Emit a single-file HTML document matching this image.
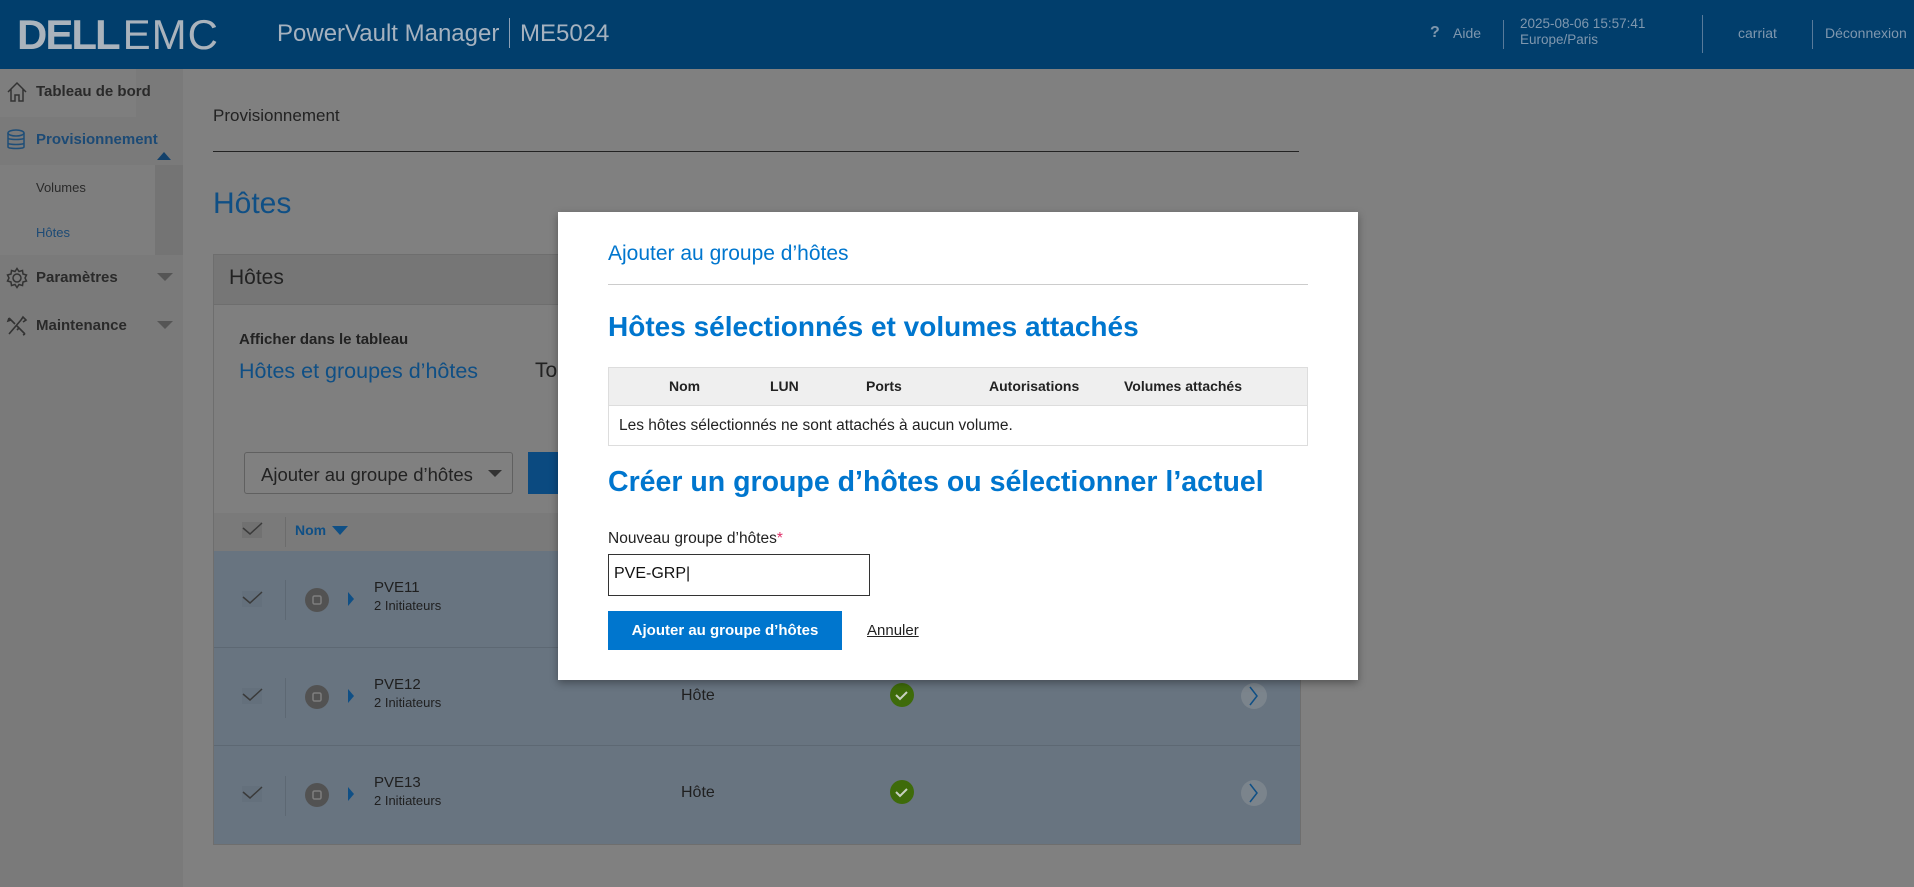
<!DOCTYPE html>
<html><head><meta charset="utf-8"><style>
*{margin:0;padding:0;box-sizing:border-box}
body{width:1914px;height:887px;overflow:hidden;background:#808080;font-family:"Liberation Sans",sans-serif;position:relative}
.a{position:absolute;white-space:nowrap}
</style></head><body>
<div class="a" style="left:0;top:0;width:1914px;height:69px;background:#013e6c"></div>
<div class="a" style="left:17px;top:11px;font-size:42px;font-weight:bold;color:#aab3bc;letter-spacing:-2px">DELL<span style="font-weight:normal;letter-spacing:1px;margin-left:4px">EMC</span></div>
<div class="a" style="left:277px;top:20px;font-size:24px;color:#a6b2bf">PowerVault Manager</div>
<div class="a" style="left:509px;top:18px;width:1px;height:30px;background:#8da0b5"></div>
<div class="a" style="left:520px;top:20px;font-size:24px;color:#a6b2bf">ME5024</div>
<div class="a" style="left:1430px;top:24px;font-size:16px;font-weight:bold;color:#7f97ae">?</div>
<div class="a" style="left:1453px;top:25px;font-size:14px;color:#7f97ae">Aide</div>
<div class="a" style="left:1503px;top:20px;width:1px;height:29px;background:#587a9a"></div>
<div class="a" style="left:1520px;top:16px;font-size:13.5px;line-height:16px;color:#7f97ae">2025-08-06 15:57:41<br>Europe/Paris</div>
<div class="a" style="left:1702px;top:15px;width:1px;height:38px;background:#587a9a"></div>
<div class="a" style="left:1738px;top:25px;font-size:14px;color:#7f97ae">carriat</div>
<div class="a" style="left:1812px;top:20px;width:1px;height:29px;background:#587a9a"></div>
<div class="a" style="left:1825px;top:25px;font-size:14px;color:#7f97ae">Déconnexion</div>

<div class="a" style="left:0;top:69px;width:183px;height:818px;background:#7a7a7a"></div>
<div class="a" style="left:0;top:69px;width:136px;height:48px;background:#7e7e7e"></div>
<div class="a" style="left:0;top:165px;width:155px;height:90px;background:#7e7e7e"></div>
<div class="a" style="left:155px;top:165px;width:28px;height:90px;background:#747474"></div>
<svg class="a" style="left:6px;top:81px" width="22" height="22" viewBox="0 0 22 22" fill="none" stroke="#333" stroke-width="1.5"><path d="M2 11L11 2l9 9M5 8v12h4v-6h4v6h4V8"/></svg>
<div class="a" style="left:36px;top:83px;font-size:15px;font-weight:bold;color:#2a2a2a">Tableau de bord</div>
<svg class="a" style="left:6px;top:129px" width="20" height="22" viewBox="0 0 20 22" fill="none" stroke="#1f4e78" stroke-width="1.5"><ellipse cx="10" cy="4" rx="8" ry="3"/><path d="M2 4v14c0 2 16 2 16 0V4M2 9c0 2 16 2 16 0M2 14c0 2 16 2 16 0"/></svg>
<div class="a" style="left:36px;top:131px;font-size:15px;font-weight:bold;color:#1c4a75">Provisionnement</div>
<div class="a" style="left:157px;top:152px;border-left:7px solid transparent;border-right:7px solid transparent;border-bottom:8px solid #13416b"></div>
<div class="a" style="left:36px;top:180px;font-size:13px;color:#2a2a2a">Volumes</div>
<div class="a" style="left:36px;top:225px;font-size:13px;color:#1c4a75">Hôtes</div>
<svg class="a" style="left:6px;top:267px" width="22" height="22" viewBox="0 0 22 22" fill="none" stroke="#333" stroke-width="1.5"><circle cx="11" cy="11" r="4"/><path d="M11 1.5l2 3 3.5-1 .5 3.5 3.5 1-1.5 3 1.5 3-3.5 1-.5 3.5-3.5-1-2 3-2-3-3.5 1-.5-3.5-3.5-1 1.5-3-1.5-3 3.5-1 .5-3.5 3.5 1z"/></svg>
<div class="a" style="left:36px;top:269px;font-size:15px;font-weight:bold;color:#2a2a2a">Paramètres</div>
<div class="a" style="left:157px;top:273px;border-left:8px solid transparent;border-right:8px solid transparent;border-top:8px solid #555"></div>
<svg class="a" style="left:6px;top:315px" width="22" height="22" viewBox="0 0 22 22" fill="none" stroke="#333" stroke-width="1.6"><path d="M3 19L15 5M15 5l2-3 3 3-3 2M3 3l6 6M3 3l-1 3 3-1M19 19l-8-8M19 19l-2 1M13 13l-2 2"/></svg>
<div class="a" style="left:36px;top:317px;font-size:15px;font-weight:bold;color:#2a2a2a">Maintenance</div>
<div class="a" style="left:157px;top:321px;border-left:8px solid transparent;border-right:8px solid transparent;border-top:8px solid #555"></div>

<div class="a" style="left:213px;top:106px;font-size:17px;color:#222">Provisionnement</div>
<div class="a" style="left:213px;top:151px;width:1086px;height:1px;background:#222"></div>
<div class="a" style="left:213px;top:187px;font-size:30px;color:#0f4f85">Hôtes</div>

<div class="a" style="left:213px;top:254px;width:1088px;height:591px;background:#7f7f7f;border:1px solid #6e6e6e"></div>
<div class="a" style="left:213px;top:254px;width:1088px;height:51px;background:#767676;border:1px solid #6e6e6e"></div>
<div class="a" style="left:229px;top:266px;font-size:21px;color:#222">Hôtes</div>
<div class="a" style="left:239px;top:331px;font-size:15px;font-weight:bold;color:#222">Afficher dans le tableau</div>
<div class="a" style="left:239px;top:359px;font-size:21.5px;color:#0f4f85">Hôtes et groupes d’hôtes</div>
<div class="a" style="left:535px;top:359px;font-size:21px;color:#222">To</div>
<div class="a" style="left:244px;top:452px;width:269px;height:42px;border:1px solid #606060;border-radius:3px;background:#808080"></div>
<div class="a" style="left:261px;top:464px;font-size:18.5px;color:#222">Ajouter au groupe d’hôtes</div>
<div class="a" style="left:488px;top:470px;border-left:7px solid transparent;border-right:7px solid transparent;border-top:7px solid #333"></div>
<div class="a" style="left:528px;top:452px;width:40px;height:42px;background:#0b4a80"></div>
<div class="a" style="left:214px;top:513px;width:1086px;height:38px;background:#7a7a7a"></div>
<div class="a" style="left:285px;top:517px;width:1px;height:30px;background:#6c6c6c"></div>
<div class="a" style="left:295px;top:522px;font-size:14px;font-weight:bold;color:#0f4f85">Nom</div>
<div class="a" style="left:332px;top:526px;border-left:8px solid transparent;border-right:8px solid transparent;border-top:9px solid #0f4f85"></div>

<div class="a" style="left:214px;top:551px;width:1086px;height:293px;background:#687480"></div>
<div class="a" style="left:214px;top:647px;width:1086px;height:1px;background:#5d6873"></div>
<div class="a" style="left:214px;top:745px;width:1086px;height:1px;background:#5d6873"></div>

<svg class="a" style="left:0;top:0" width="1914" height="887">
<g fill="#606b75"><rect x="242" y="522" width="20" height="16" fill="#717171"/><rect x="242" y="591" width="20" height="16" opacity="0.4"/><rect x="242" y="688" width="20" height="16" opacity="0.4"/><rect x="242" y="786" width="20" height="16" opacity="0.4"/></g>
<g stroke="#3a3a3a" stroke-width="1.5" fill="none">
<path d="M243 528l7 6 12-11"/><path d="M243 597l7 6 12-11"/><path d="M243 694l7 6 12-11"/><path d="M243 792l7 6 12-11"/>
</g>
<g stroke="#5d6873"><path d="M285.5 580v40M285.5 678v40M285.5 776v40"/></g>
<g fill="#525252"><circle cx="317" cy="600" r="12"/><circle cx="317" cy="697" r="12"/><circle cx="317" cy="795" r="12"/></g>
<g fill="none" stroke="#7e7e7e" stroke-width="1.5"><rect x="313" y="596" width="8" height="8" rx="1.5"/><rect x="313" y="693" width="8" height="8" rx="1.5"/><rect x="313" y="791" width="8" height="8" rx="1.5"/></g>
<g fill="#0f4f85"><path d="M348 592l6 7-6 7z"/><path d="M348 689l6 7-6 7z"/><path d="M348 787l6 7-6 7z"/></g>
<g fill="#3e6b0a"><circle cx="902" cy="695" r="12"/><circle cx="902" cy="792" r="12"/></g>
<g stroke="#c8d0c0" stroke-width="2" fill="none"><path d="M896 695l4 4 7-7"/><path d="M896 792l4 4 7-7"/></g>
<g fill="#7b848c"><circle cx="1254" cy="696" r="13"/><circle cx="1254" cy="793" r="13"/></g>
<g stroke="#0f4f85" stroke-width="1.5" fill="none"><path d="M1250 687l7 9-7 9"/><path d="M1250 784l7 9-7 9"/></g>
</svg>
<div class="a" style="left:374px;top:579px;font-size:15px;color:#1f1f1f">PVE11</div>
<div class="a" style="left:374px;top:598px;font-size:13px;color:#1f1f1f">2 Initiateurs</div>
<div class="a" style="left:374px;top:676px;font-size:15px;color:#1f1f1f">PVE12</div>
<div class="a" style="left:374px;top:695px;font-size:13px;color:#1f1f1f">2 Initiateurs</div>
<div class="a" style="left:374px;top:774px;font-size:15px;color:#1f1f1f">PVE13</div>
<div class="a" style="left:374px;top:793px;font-size:13px;color:#1f1f1f">2 Initiateurs</div>
<div class="a" style="left:681px;top:687px;font-size:16px;color:#1f1f1f">Hôte</div>
<div class="a" style="left:681px;top:784px;font-size:16px;color:#1f1f1f">Hôte</div>

<div class="a" style="left:558px;top:212px;width:800px;height:468px;background:#fff;box-shadow:0 3px 8px rgba(0,0,0,0.35)"></div>
<div class="a" style="left:608px;top:242px;font-size:21px;color:#0076ce">Ajouter au groupe d’hôtes</div>
<div class="a" style="left:608px;top:284px;width:700px;height:1px;background:#ccc"></div>
<div class="a" style="left:608px;top:311px;font-size:28px;font-weight:bold;color:#0076ce">Hôtes sélectionnés et volumes attachés</div>
<div class="a" style="left:608px;top:367px;width:700px;height:79px;border:1px solid #ddd"></div>
<div class="a" style="left:609px;top:368px;width:698px;height:38px;background:#efefef;border-bottom:1px solid #ddd"></div>
<div class="a" style="left:669px;top:378px;font-size:14px;font-weight:bold;color:#222">Nom</div>
<div class="a" style="left:770px;top:378px;font-size:14px;font-weight:bold;color:#222">LUN</div>
<div class="a" style="left:866px;top:378px;font-size:14px;font-weight:bold;color:#222">Ports</div>
<div class="a" style="left:989px;top:378px;font-size:14px;font-weight:bold;color:#222">Autorisations</div>
<div class="a" style="left:1124px;top:378px;font-size:14px;font-weight:bold;color:#222">Volumes attachés</div>
<div class="a" style="left:619px;top:417px;font-size:15.5px;color:#222">Les hôtes sélectionnés ne sont attachés à aucun volume.</div>
<div class="a" style="left:608px;top:466px;font-size:28.5px;font-weight:bold;color:#0076ce">Créer un groupe d’hôtes ou sélectionner l’actuel</div>
<div class="a" style="left:608px;top:530px;font-size:15.5px;color:#222">Nouveau groupe d’hôtes<span style="color:#e0306a">*</span></div>
<div class="a" style="left:608px;top:554px;width:262px;height:42px;border:1.5px solid #333"></div>
<div class="a" style="left:614px;top:565px;font-size:16px;color:#111">PVE-GRP|</div>
<div class="a" style="left:608px;top:611px;width:234px;height:39px;background:#0076ce"></div>
<div class="a" style="left:608px;top:622px;width:234px;text-align:center;font-size:15px;font-weight:bold;color:#fff">Ajouter au groupe d’hôtes</div>
<div class="a" style="left:867px;top:622px;font-size:15px;color:#222;text-decoration:underline">Annuler</div>
</body></html>
